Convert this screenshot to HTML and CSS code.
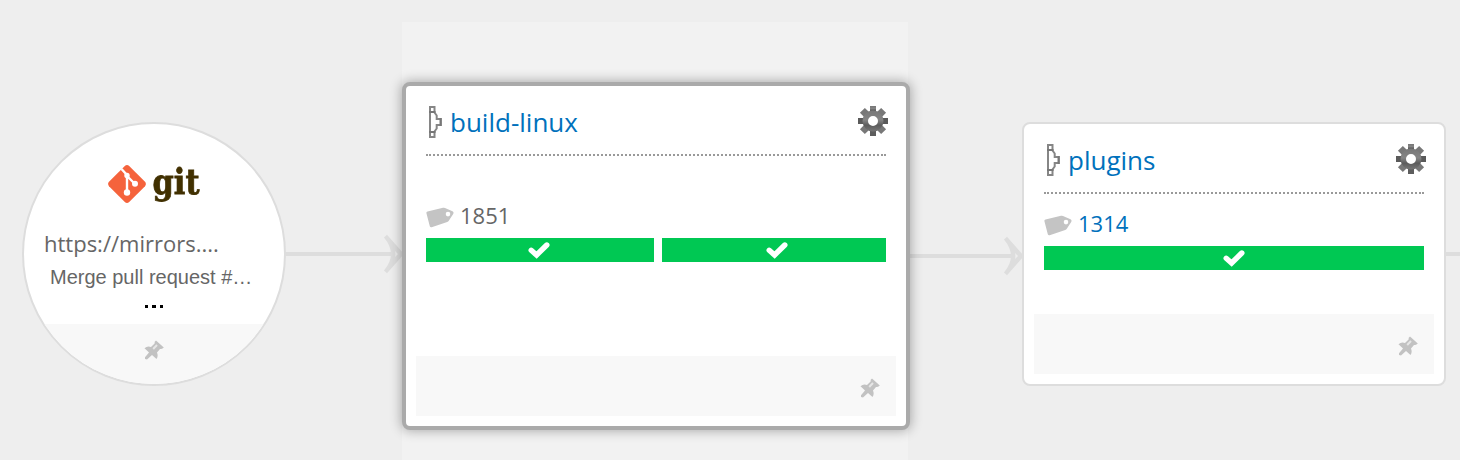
FILE: index.html
```html
<!DOCTYPE html>
<html lang="en">
<head>
<meta charset="utf-8">
<title>Value stream map</title>
<link rel="stylesheet" href="styles.css">
</head>
<body>
<svg class="defs" width="0" height="0" aria-hidden="true">
  <defs>
    <linearGradient id="gearFill" x1="0" y1="0" x2="0" y2="1">
      <stop offset="0" stop-color="#777"/><stop offset=".45" stop-color="#858585"/><stop offset=".7" stop-color="#5c5c5c"/><stop offset="1" stop-color="#777"/>
    </linearGradient>
    <symbol id="pipeline" viewBox="0 0 14 34">
      <path d="M2 2h4.500v5.500l2.200 3v3.500h4v6h-4v3.500l-2.200 3v5.500h-4.500z" fill="#fff" stroke="#868686" stroke-width="2"/>
      <path d="M1 7h6.500 M1 27h6.500" stroke="#777" stroke-width="1.800"/>
      <path d="M12.700 13v8" fill="none" stroke="#777" stroke-width="2"/>
    </symbol>
    <symbol id="gear" viewBox="-15 -15 30 30">
      <g fill="url(#gearFill)">
        <path d="M-3-15h6v6h-6z"/><path d="M-3 9h6v6h-6z" fill="#5d5d5d"/>
        <path d="M-15-3h6v6h-6z" fill="#5a5a5a"/><path d="M9-3h6v6H9z" fill="#5a5a5a"/>
        <g transform="rotate(45)" fill="#787878"><path d="M-3.500-15h7v7h-7z M-3.500 8h7v7h-7z"/><path d="M-15-3.500h7v7h-7z M8-3.500h7v7h-7z"/></g>
        <path fill-rule="evenodd" d="M0-10.500a10.500 10.500 0 1 1 0 21a10.500 10.500 0 1 1 0-21z M0-5a5 5 0 1 0 0 10a5 5 0 1 0 0-10z"/>
      </g>
    </symbol>
    <symbol id="tag" viewBox="0 0 28 21">
      <path fill-rule="evenodd" d="M.5 6.500Q0 5 1.500 4.600L17 .8Q18 .5 19 .9L26.500 4.300Q28.200 5.300 27.200 6.900L22.800 13.700Q22.200 14.700 21.200 15L5.700 20.200Q4.200 20.500 3.800 19.200Z M22 4.800a2.300 2.300 0 1 0 0 4.600a2.300 2.300 0 1 0 0-4.600z" fill="#c4c4c4"/>
    </symbol>
    <symbol id="pin" viewBox="0 0 20 20">
      <path d="M12 .5L19.800 7.500Q17.500 9.500 16 9L13 12.500Q14.500 16 12.500 19L8 15L3 19.500L1 19V17.300L5 12.500L.5 8.200Q3.300 5.800 7 7L10.600 3.600Q10.200 1.700 12 .5z" fill="#c2c2c2"/>
      <path d="M9.200 9L13 5" stroke="#e6e6e6" stroke-width="2"/>
    </symbol>
    <symbol id="check" viewBox="0 0 22 18">
      <path d="M3.200 9.300L8.600 14L18.800 4" fill="none" stroke="#fff" stroke-width="5.400" stroke-linecap="round" stroke-linejoin="miter"/>
    </symbol>
    <symbol id="connector" viewBox="0 0 124 40">
      <path d="M0 18h111v4H0z"/>
      <path fill-rule="evenodd" d="M100 3.500L103 .8L120 20L103 39.200L100 36.500Q107 28 107 20T100 3.500z M111 17l3 3-3 3q.8-3 0-6z"/>
    </symbol>
  </defs>
</svg>

<main class="map">
  <div class="lane"></div>

  <svg class="link link-a"><use href="#connector"/></svg>
  <svg class="link link-b"><use href="#connector"/></svg>
  <div class="link-out"></div>

  <section class="material">
    <svg class="git-logo" viewBox="0 0 96 48">
      <path d="M17.800 4Q20 2 22.200 4L38 19.800Q39.800 22 38 24.200L22.200 40Q20 42 17.800 40L2 24.200Q.200 22 2 19.800z" fill="#f5633c"/>
      <path d="M14.500 7L20 13V31 M20 14L28 22" fill="none" stroke="#fff" stroke-width="2.400"/>
      <circle cx="20" cy="13.500" r="2.700" fill="#fff"/><circle cx="20" cy="30.500" r="3.200" fill="#fff"/><circle cx="28" cy="21.800" r="3" fill="#fff"/>
      <text class="git-word" x="45.500" y="32" textLength="47" lengthAdjust="spacingAndGlyphs">git</text>
    </svg>
    <div class="repo">https://mirrors....</div>
    <div class="commit">Merge pull request #…</div>
    <div class="more"><i></i><i></i><i></i></div>
    <div class="material-foot"><svg class="pin"><use href="#pin"/></svg></div>
  </section>

  <article class="card card-current">
    <header class="card-head">
      <svg class="pipe"><use href="#pipeline"/></svg>
      <a class="name">build-linux</a>
      <svg class="gear"><use href="#gear"/></svg>
    </header>
    <div class="run"><svg class="tag"><use href="#tag"/></svg><span class="label">1851</span></div>
    <div class="stages">
      <div class="stage stage-wide"><svg class="check"><use href="#check"/></svg></div>
      <div class="stage stage-last"><svg class="check"><use href="#check"/></svg></div>
    </div>
    <footer class="card-foot"><svg class="pin"><use href="#pin"/></svg></footer>
  </article>

  <article class="card card-next">
    <header class="card-head">
      <svg class="pipe"><use href="#pipeline"/></svg>
      <a class="name">plugins</a>
      <svg class="gear"><use href="#gear"/></svg>
    </header>
    <div class="run"><svg class="tag"><use href="#tag"/></svg><a class="label label-link">1314</a></div>
    <div class="stages">
      <div class="stage"><svg class="check"><use href="#check"/></svg></div>
    </div>
    <footer class="card-foot"><svg class="pin"><use href="#pin"/></svg></footer>
  </article>
</main>
</body>
</html>
```

FILE: styles.css
```css
* { box-sizing: border-box; }
body { margin: 0; background: #eee; font-family: "Open Sans", sans-serif; color: #666; }
svg { display: block; flex: none; }
.defs { position: absolute; }

/* Free canvas: nodes and links are placed by coordinates */
.map { position: relative; width: 1460px; height: 460px; overflow: hidden; }
.lane { position: absolute; left: 402px; top: 22px; width: 506px; height: 438px; background: #f2f2f2; }
.link { position: absolute; width: 124px; height: 40px; fill: #ddd; }
.link-a { left: 284px; top: 234px; }
.link-b { left: 904px; top: 236px; }
.link-out { position: absolute; left: 1446px; top: 252px; width: 14px; height: 4px; background: #ddd; }

.material {
  position: absolute; left: 22px; top: 122px; width: 264px; height: 264px;
  display: flex; flex-direction: column;
  border: 2px solid #ddd; border-radius: 50%; background: #fff; overflow: hidden;
}
.git-logo { width: 96px; height: 48px; margin: 38px 0 0 83px; overflow: visible; filter: blur(.3px); }
.git-word { font: bold 36px "DejaVu Serif", serif; fill: #413000; stroke: #413000; stroke-width: .8px; }
.repo { margin: 17px 0 0 20px; font-size: 22px; line-height: 32px; white-space: nowrap; }
.commit { margin: 6px 0 0 26px; font: 20px/24px "Liberation Sans", sans-serif; white-space: nowrap; }
.more { display: flex; justify-content: center; gap: 4px; margin-top: 16px; }
.more i { width: 3.5px; height: 3px; background: #000; }
.material-foot { display: flex; justify-content: center; margin-top: auto; height: 60px; padding-top: 16px; background: #f8f8f8; }
.pin { width: 20px; height: 20px; filter: blur(.6px); }

.card { position: absolute; display: flex; flex-direction: column; background: #fff; border-radius: 8px; }
.card-current {
  left: 402px; top: 82px; width: 508px; height: 348px; padding: 18px 10px 10px;
  border: 4px solid #aaa; box-shadow: 0 0 12px 1px rgba(0, 0, 0, .3);
}
.card-next { left: 1022px; top: 122px; width: 424px; height: 264px; padding: 18px 10px 10px; border: 2px solid #ddd; }
.card-head { display: flex; align-items: flex-start; height: 52px; margin: 0 10px; border-bottom: 2px dotted #999; }
.pipe { width: 14px; height: 34px; margin: 1px 0 0 2px; filter: blur(.4px); }
.name { margin-left: 8px; font-size: 26px; line-height: 36px; color: #0071bc; }
.gear { width: 30px; height: 30px; margin: 2px -2px 0 auto; filter: blur(.3px); }
.run { display: flex; align-items: center; height: 32px; margin: 43px 10px 0; }
.card-next .run { margin-top: 13px; }
.tag { width: 28px; height: 21px; margin-top: 5px; filter: blur(.5px); }
.label { margin-left: 6px; font-size: 22px; line-height: 32px; }
.label-link { color: #0071bc; }
.stages { display: flex; gap: 8px; margin: 7px 10px 0; }
.stage { flex: 1; display: flex; align-items: center; justify-content: center; height: 24px; background: #00c853; }
.stage-wide { flex: 0 0 228px; padding-right: 2px; }
.stage-last { padding-left: 6px; }
.check { width: 22px; height: 18px; }
.card-foot { display: flex; justify-content: flex-end; height: 60px; margin-top: auto; padding: 22px 16px 0 0; background: #f8f8f8; }
```
